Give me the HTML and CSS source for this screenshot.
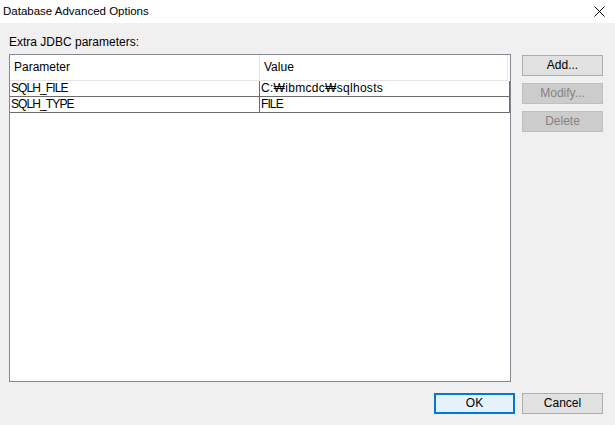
FILE: index.html
```html
<!DOCTYPE html>
<html>
<head>
<meta charset="utf-8">
<title>Database Advanced Options</title>
<link rel="stylesheet" href="styles.css">
</head>
<body>
<div class="window">
  <div class="titlebar">
    <span class="title">Database Advanced Options</span>
    <svg class="close" width="11" height="11" viewBox="0 0 11 11"><path d="M0.5 0.5 L10.5 10.5 M10.5 0.5 L0.5 10.5" stroke="#000" stroke-width="1" fill="none"/></svg>
  </div>
  <div class="content">
    <div class="label">Extra JDBC parameters:</div>
    <div class="main">
      <div class="table">
        <div class="row head">
          <div class="cell c1">Parameter</div>
          <div class="cell c2">Value</div>
        </div>
        <div class="row r1">
          <div class="cell c1 caps">SQLH_FILE</div>
          <div class="cell c2 path">C:₩ibmcdc₩sqlhosts</div>
        </div>
        <div class="row r2">
          <div class="cell c1 caps">SQLH_TYPE</div>
          <div class="cell c2 caps">FILE</div>
        </div>
      </div>
      <div class="side">
        <button class="btn">Add...</button>
        <button class="btn disabled">Modify...</button>
        <button class="btn disabled">Delete</button>
      </div>
    </div>
    <div class="footer">
      <button class="btn default">OK</button>
      <button class="btn">Cancel</button>
    </div>
  </div>
</div>
</body>
</html>
```
FILE: styles.css
```css
html, body {
  margin: 0;
  padding: 0;
  background: #f0f0f0;
  font-family: "Liberation Sans", Arial, sans-serif;
  font-size: 12px;
  color: #000;
}
.window {
  width: 615px;
  height: 425px;
  overflow: hidden;
}
.titlebar {
  height: 23px;
  background: #fff;
  display: flex;
  align-items: center;
  justify-content: space-between;
  padding: 0 10px 0 3px;
}
.title {
  font-size: 11.5px;
  line-height: 23px;
  padding-top: 0px;
}
.close {
  display: block;
  margin-top: 0px;
}
.content {
  padding: 12px 0 0 9px;
}
.label {
  line-height: 15px;
  height: 15px;
}
.main {
  display: flex;
  margin-top: 4px;
}
.table {
  width: 500px;
  height: 326px;
  border: 1px solid #828790;
  background: #fff;
}
.row {
  display: flex;
}
.cell {
  box-sizing: border-box;
  white-space: nowrap;
  overflow: hidden;
}
.c1 { width: 250px; }
.c2 { width: 250px; }
.head .cell {
  height: 26px;
  line-height: 25px;
  border-bottom: 1px solid #e5e5e5;
  border-right: 1px solid #e5e5e5;
  padding-left: 4px;
}
.head .c2 {
  width: 248px;
}
.r1 .cell, .r2 .cell {
  height: 16px;
  line-height: 15px;
  padding-left: 1px;
  border-bottom: 1px solid #6d6d6d;
  border-right: 1px solid #6d6d6d;
}
.caps {
  letter-spacing: -0.9px;
}
.path {
  letter-spacing: 0.3px;
}
.side {
  display: flex;
  flex-direction: column;
  gap: 7px;
  margin-left: 11px;
  padding-top: 1px;
}
.btn {
  width: 81px;
  height: 21px;
  box-sizing: border-box;
  margin: 0;
  padding: 0;
  background: #e1e1e1;
  border: 1px solid #adadad;
  font-family: "Liberation Sans", Arial, sans-serif;
  font-size: 12px;
  color: #000;
  line-height: 19px;
}
.btn.disabled {
  background: #cccccc;
  border-color: #bfbfbf;
  color: #838383;
}
.btn.default {
  background: #e5f1fb;
  border: 2px solid #0078d7;
  line-height: 17px;
}
.footer {
  display: flex;
  gap: 7px;
  margin-top: 11px;
  padding-left: 425px;
}
```
